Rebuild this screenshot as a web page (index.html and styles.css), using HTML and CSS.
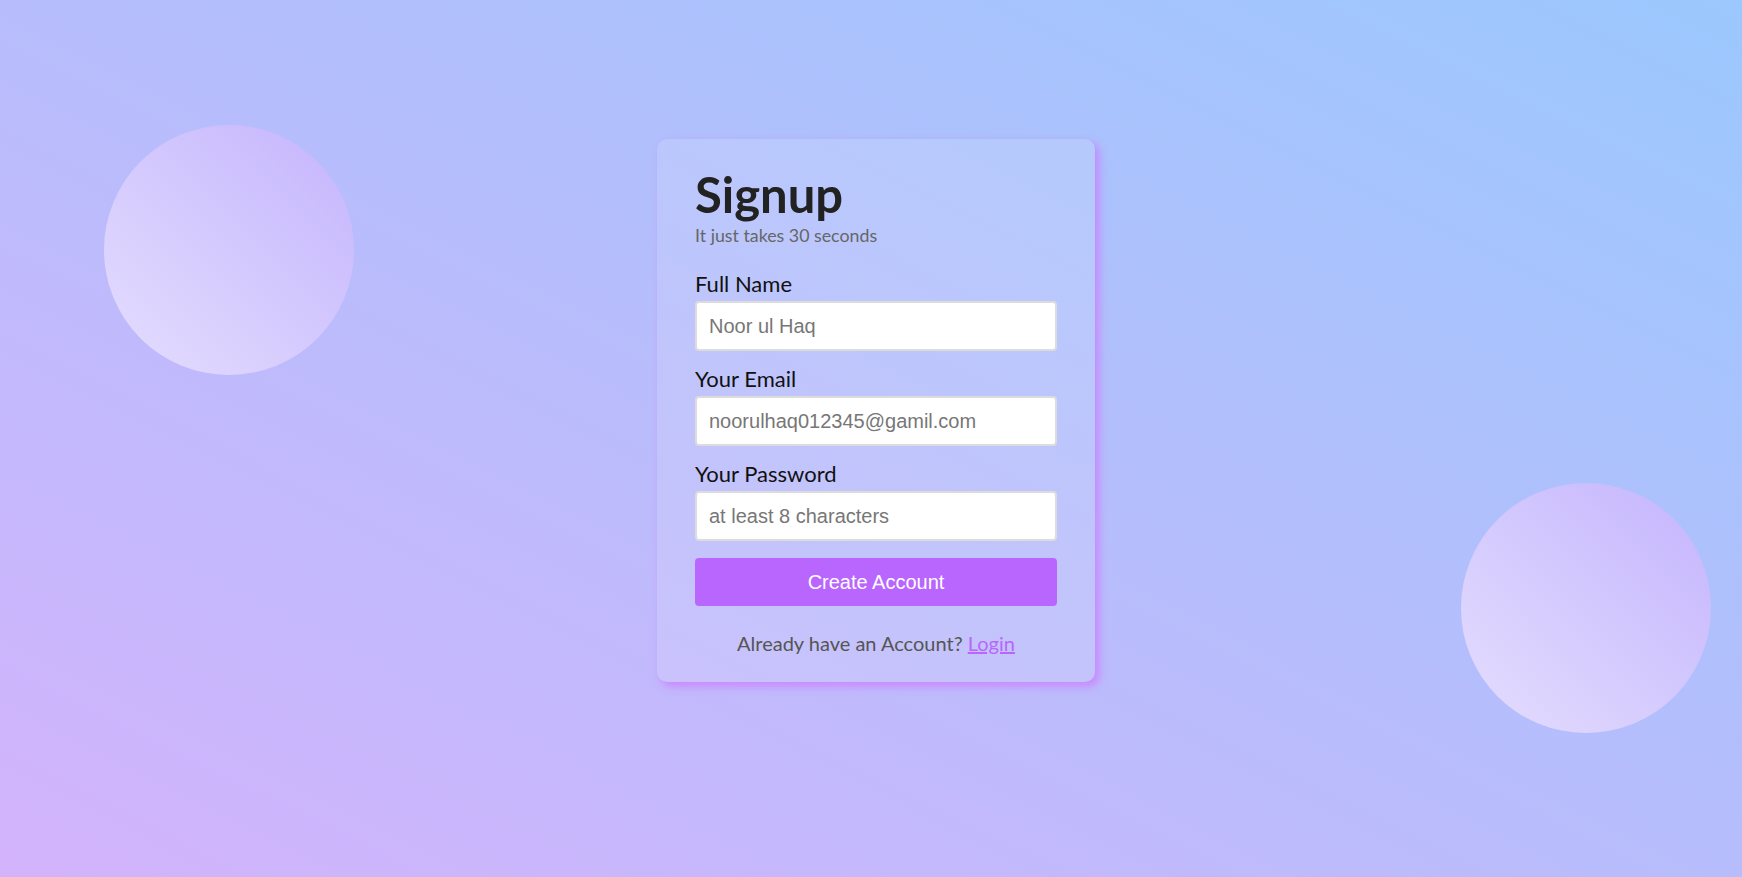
FILE: index.html
```html
<!DOCTYPE html>
<html lang="en">
<head>
<meta charset="utf-8">
<title>Signup</title>
<link rel="stylesheet" href="styles.css">
</head>
<body>
<div class="bubble bubble-left"></div>
<div class="bubble bubble-right"></div>
<main class="page">
  <form class="card">
    <h1 class="title">Signup</h1>
    <p class="subtitle">It just takes 30 seconds</p>
    <div class="field">
      <label class="label" for="name">Full Name</label>
      <input class="input" id="name" type="text" placeholder="Noor ul Haq">
    </div>
    <div class="field">
      <label class="label" for="email">Your Email</label>
      <input class="input" id="email" type="email" placeholder="noorulhaq012345@gamil.com">
    </div>
    <div class="field">
      <label class="label" for="password">Your Password</label>
      <input class="input" id="password" type="password" placeholder="at least 8 characters">
    </div>
    <button class="btn" type="button">Create Account</button>
    <p class="footer">Already have an Account? <a class="link" href="#">Login</a></p>
  </form>
</main>
</body>
</html>
```

FILE: styles.css
```css
* { box-sizing: border-box; }

html, body { height: 100%; }

body {
  margin: 0;
  font-family: Lato, "Noto Sans", sans-serif;
  background: linear-gradient(to top right, #d3b3fc 0%, #b7bdfc 50%, #9bc8fe 100%);
  overflow: hidden;
  position: relative;
}

.bubble {
  position: absolute;
  width: 250px;
  height: 250px;
  border-radius: 50%;
  background: linear-gradient(to top right, #e4defe 0%, #c4b4fd 100%);
  z-index: 0;
}
.bubble-left { left: 104px; top: 125px; }
.bubble-right { left: 1461px; top: 483px; }

.page {
  position: relative;
  z-index: 1;
  display: flex;
  justify-content: center;
  align-items: flex-start;
  padding: 139px 0 0 10px;
}

.card {
  width: 438px;
  height: 543px;
  padding: 30px 38px 0;
  border-radius: 10px;
  background: rgba(255, 255, 255, 0.13);
  box-shadow: 4px 4px 8px rgba(206, 120, 255, 0.8);
  display: flex;
  flex-direction: column;
}

.title {
  margin: 0;
  font-size: 49px;
  line-height: 50px;
  font-weight: 700;
  color: #222;
}

.subtitle {
  margin: 5px 0 0;
  font-size: 17.8px;
  line-height: 22px;
  color: #666;
}

.field {
  display: flex;
  flex-direction: column;
  gap: 5px;
}
.field:first-of-type { margin-top: 26px; }
.field + .field { margin-top: 16px; }

.label {
  font-size: 22px;
  line-height: 24px;
  color: #111;
}

.input {
  width: 100%;
  height: 50px;
  padding: 0 12px;
  border: 2px solid #dcdcdc;
  border-radius: 4px;
  background: #fff;
  font-family: "Liberation Sans", Arial, sans-serif;
  font-size: 20px;
  color: #333;
  outline: none;
}
.input::placeholder { color: #777; }

.btn {
  margin-top: 17px;
  width: 100%;
  height: 48px;
  border: none;
  border-radius: 4px;
  background: #b866fd;
  color: #fff;
  font-family: "Liberation Sans", Arial, sans-serif;
  font-size: 20px;
  cursor: pointer;
}

.footer {
  margin: 25px 0 0;
  text-align: center;
  font-size: 20px;
  line-height: 24px;
  color: #555;
}

.link { color: #b866fd; }
```
